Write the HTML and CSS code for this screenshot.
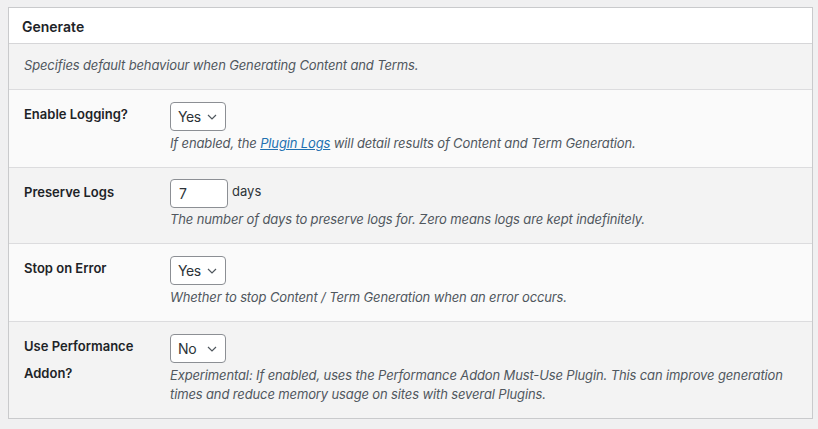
FILE: index.html
```html
<!DOCTYPE html>
<html lang="en">
<head>
  <meta charset="UTF-8" />
  <title>Generate Settings</title>
  <link rel="stylesheet" href="styles.css">
</head>
<body>
  <div class="panel">
    <h3 class="panel-title">Generate</h3>
    <div class="panel-desc">Specifies default behaviour when Generating Content and Terms.</div>

    <div class="row row-light">
      <div class="label">Enable Logging?</div>
      <div class="field">
        <div class="select"><span>Yes</span>
          <svg width="10" height="6" viewBox="0 0 10 6"><path d="M1 1l4 4 4-4" fill="none" stroke="#50575e" stroke-width="1.2"/></svg>
        </div>
        <p class="help">If enabled, the <a href="#">Plugin Logs</a> will detail results of Content and Term Generation.</p>
      </div>
    </div>

    <div class="row">
      <div class="label">Preserve Logs</div>
      <div class="field">
        <div class="inline">
          <div class="input">7</div>
          <span class="unit">days</span>
        </div>
        <p class="help">The number of days to preserve logs for. Zero means logs are kept indefinitely.</p>
      </div>
    </div>

    <div class="row row-light">
      <div class="label">Stop on Error</div>
      <div class="field">
        <div class="select"><span>Yes</span>
          <svg width="10" height="6" viewBox="0 0 10 6"><path d="M1 1l4 4 4-4" fill="none" stroke="#50575e" stroke-width="1.2"/></svg>
        </div>
        <p class="help">Whether to stop Content / Term Generation when an error occurs.</p>
      </div>
    </div>

    <div class="row">
      <div class="label">Use Performance Addon?</div>
      <div class="field">
        <div class="select"><span>No</span>
          <svg width="10" height="6" viewBox="0 0 10 6"><path d="M1 1l4 4 4-4" fill="none" stroke="#50575e" stroke-width="1.2"/></svg>
        </div>
        <p class="help">Experimental: If enabled, uses the Performance Addon Must-Use Plugin. This can improve generation times and reduce memory usage on sites with several Plugins.</p>
      </div>
    </div>
  </div>
</body>
</html>
```

FILE: styles.css
```css
body {
  margin: 0;
  padding: 7px 5px 0 8px;
  background: #f0f0f1;
  font-family: Inter, "Noto Sans", sans-serif;
  font-size: 13px;
  color: #1d2327;
}

.panel {
  background: #f3f3f3;
  border: 1px solid #c9cacc;
  width: 803px;
}

.panel-title {
  margin: 0;
  background: #fff;
  font-size: 14px;
  font-weight: 600;
  padding: 10px 13px 0;
  height: 25px;
  border-bottom: 1px solid #d6d6d8;
}

.panel-desc {
  padding: 13px 15px 16px;
  line-height: 16px;
  font-style: italic;
  letter-spacing: -0.14px;
  color: #50575e;
  border-bottom: 1px solid #dcdcde;
}

.row {
  display: flex;
  padding: 11px 15px 14px;
  border-bottom: 1px solid #dcdcde;
}

.row:last-child {
  border-bottom: none;
}

.row-light {
  background: #fafafa;
}

.label {
  width: 146px;
  flex-shrink: 0;
  font-weight: 600;
  line-height: 27px;
  color: #1d2327;
}

.field {
  flex: 1;
}

.select {
  display: flex;
  align-items: center;
  justify-content: space-between;
  box-sizing: border-box;
  width: 56px;
  height: 29px;
  margin-top: 1px;
  padding: 0 8px 0 7px;
  background: #fff;
  border: 1px solid #8c8f94;
  border-radius: 4px;
  font-size: 14px;
  letter-spacing: -0.4px;
  color: #2c3338;
}

.select + .help {
  margin-top: 3px;
}

.inline {
  display: flex;
  align-items: flex-start;
  gap: 4px;
}

.input {
  box-sizing: border-box;
  width: 58px;
  height: 29px;
  line-height: 27px;
  padding-left: 8px;
  background: #fff;
  border: 1px solid #8c8f94;
  border-radius: 4px;
  font-size: 14px;
  color: #2c3338;
}

.unit {
  line-height: 25px;
  color: #2c3338;
}

.help {
  margin: 2px 0 0;
  line-height: 19px;
  font-style: italic;
  letter-spacing: -0.13px;
  color: #50575e;
}

.help a {
  color: #2271b1;
}
```
